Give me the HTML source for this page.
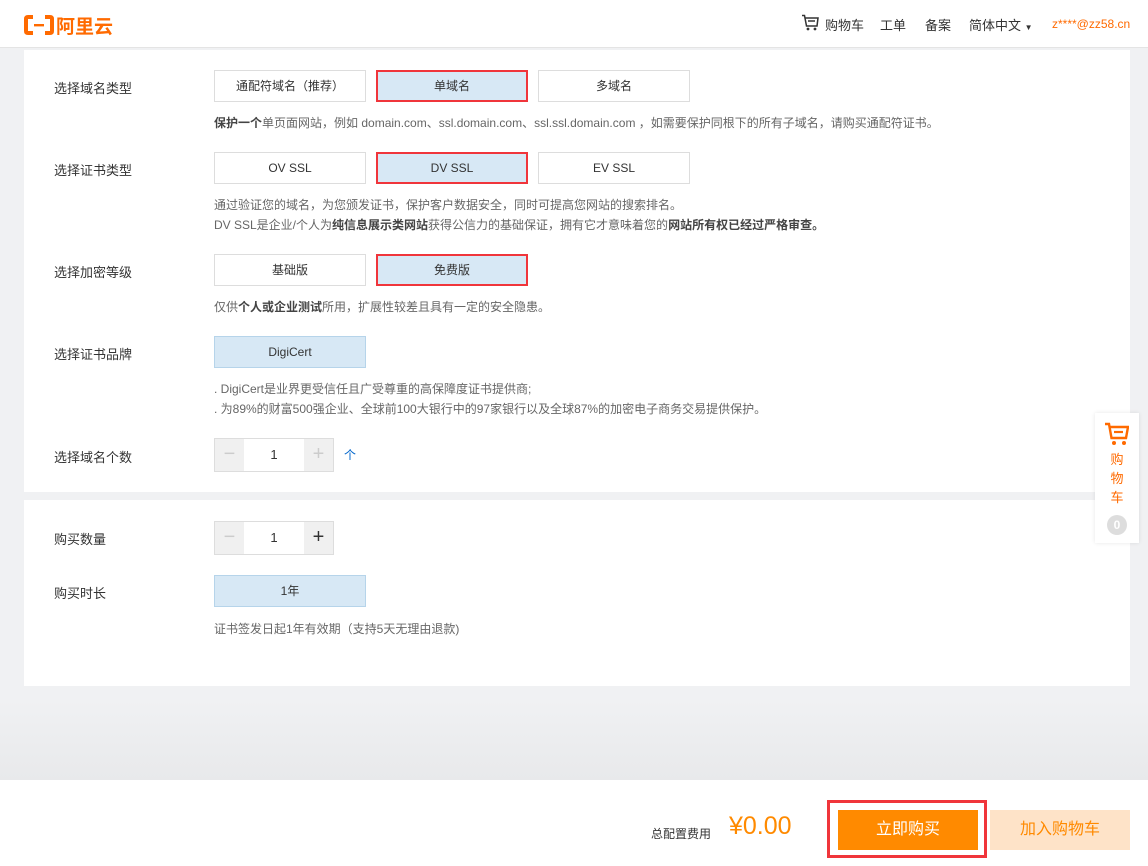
<!DOCTYPE html>
<html><head><meta charset="utf-8"><style>
*{margin:0;padding:0;box-sizing:border-box}
body{width:1148px;height:866px;overflow:hidden;background:#f0f1f3;font-family:"Liberation Sans","Noto Sans CJK SC",sans-serif;position:relative;color:#333}
.a{position:absolute;white-space:nowrap}
.hdr{left:0;top:0;width:1148px;height:48px;background:#fff;border-bottom:1px solid #e4e4e4}
.panel{background:#fff;left:24px;width:1106px}
.lbl{font-size:13px;color:#333;left:54px}
.btn{width:152px;height:32px;border:1px solid #ddd;background:#fff;font-size:12px;color:#333;text-align:center;line-height:30px}
.sel{background:#d7e8f5;border:1px solid #b6d4ea}
.red{border:2px solid #f0353b;line-height:28px}
.desc{font-size:12px;color:#666;left:214px;white-space:nowrap}
.desc b{color:#444}
.step{width:120px;height:34px;border:1px solid #ddd;background:#fff;left:214px}
.step .m,.step .p{position:absolute;top:0;width:29px;height:32px;background:#f0f0f0;color:#ccc;font-size:20px;text-align:center;line-height:30px}
.step .m{left:0}.step .p{right:0}
.step .v{position:absolute;left:29px;right:29px;top:0;line-height:32px;text-align:center;font-size:13px}
</style></head><body>
<div class="a" style="left:0;top:700px;width:1148px;height:80px;background:linear-gradient(#f0f1f3,#e8e9eb)"></div>
<div class="a hdr"></div>
<div class="a" style="left:24px;top:14px;width:100px;height:22px">
<svg width="30" height="20" viewBox="0 0 30 20" style="position:absolute;left:0;top:1px"><path d="M9 2H4Q2 2 2 4V16Q2 18 4 18H9M21 2H26Q28 2 28 4V16Q28 18 26 18H21" stroke="#ff6a00" stroke-width="4" fill="none"/><rect x="10" y="9" width="10" height="2.4" fill="#ff6a00"/></svg>
<span class="a" style="left:32px;top:-2px;font-size:19px;font-weight:bold;color:#ff6a00">阿里云</span></div>
<svg class="a" style="left:801px;top:14px" width="18" height="17" viewBox="0 0 18 17"><path d="M1 1.5H3.5L5.5 12H16L17 4H4.5" stroke="#333" stroke-width="1.5" fill="none"/><path d="M7 7H14" stroke="#333" stroke-width="1.5"/><circle cx="7" cy="15" r="1.4" fill="#333"/><circle cx="14" cy="15" r="1.4" fill="#333"/></svg>
<span class="a" style="left:825px;top:15px;font-size:13px">购物车</span>
<span class="a" style="left:880px;top:15px;font-size:13px">工单</span>
<span class="a" style="left:925px;top:15px;font-size:13px">备案</span>
<span class="a" style="left:969px;top:15px;font-size:13px">简体中文 <span style="font-size:8px">▼</span></span>
<span class="a" style="left:1052px;top:17px;font-size:12px;color:#ff6a00">z****@zz58.cn</span>

<div class="a panel" style="top:50px;height:442px"></div>
<div class="a panel" style="top:500px;height:186px"></div>

<span class="a lbl" style="top:78px">选择域名类型</span>
<div class="a btn" style="left:214px;top:70px">通配符域名（推荐）</div>
<div class="a btn sel red" style="left:376px;top:70px">单域名</div>
<div class="a btn" style="left:538px;top:70px">多域名</div>
<div class="a desc" style="top:114px"><b>保护一个</b>单页面网站，例如 domain.com、ssl.domain.com、ssl.ssl.domain.com ，如需要保护同根下的所有子域名，请购买通配符证书。</div>

<span class="a lbl" style="top:160px">选择证书类型</span>
<div class="a btn" style="left:214px;top:152px">OV SSL</div>
<div class="a btn sel red" style="left:376px;top:152px">DV SSL</div>
<div class="a btn" style="left:538px;top:152px">EV SSL</div>
<div class="a desc" style="top:196px">通过验证您的域名，为您颁发证书，保护客户数据安全，同时可提高您网站的搜索排名。</div>
<div class="a desc" style="top:216px">DV SSL是企业/个人为<b>纯信息展示类网站</b>获得公信力的基础保证，拥有它才意味着您的<b>网站所有权已经过严格审查。</b></div>

<span class="a lbl" style="top:262px">选择加密等级</span>
<div class="a btn" style="left:214px;top:254px">基础版</div>
<div class="a btn sel red" style="left:376px;top:254px">免费版</div>
<div class="a desc" style="top:298px">仅供<b>个人或企业测试</b>所用，扩展性较差且具有一定的安全隐患。</div>

<span class="a lbl" style="top:344px">选择证书品牌</span>
<div class="a btn sel" style="left:214px;top:336px">DigiCert</div>
<div class="a desc" style="top:380px">. DigiCert是业界更受信任且广受尊重的高保障度证书提供商;</div>
<div class="a desc" style="top:400px">. 为89%的财富500强企业、全球前100大银行中的97家银行以及全球87%的加密电子商务交易提供保护。</div>

<span class="a lbl" style="top:447px">选择域名个数</span>
<div class="a step" style="top:438px"><div class="m">−</div><div class="v">1</div><div class="p">+</div></div>
<span class="a" style="left:344px;top:446px;font-size:12px;color:#06c">个</span>

<span class="a lbl" style="top:529px">购买数量</span>
<div class="a step" style="top:521px"><div class="m">−</div><div class="v">1</div><div class="p" style="color:#333">+</div></div>
<span class="a lbl" style="top:583px">购买时长</span>
<div class="a btn sel" style="left:214px;top:575px">1年</div>
<div class="a desc" style="top:620px">证书签发日起1年有效期（支持5天无理由退款)</div>

<div class="a" style="left:0;top:780px;width:1148px;height:86px;background:#fff"></div>
<span class="a" style="left:651px;top:825px;font-size:12px;color:#333">总配置费用</span>
<span class="a" style="left:729px;top:812px;font-size:25px;color:#ff8a00">¥0.00</span>
<div class="a" style="left:827px;top:800px;width:160px;height:58px;border:3px solid #f0353b"></div>
<div class="a" style="left:838px;top:810px;width:140px;height:40px;background:#ff8a00;color:#fff;font-size:16px;text-align:center;line-height:40px">立即购买</div>
<div class="a" style="left:990px;top:810px;width:140px;height:40px;background:#fee3c8;color:#ff8a00;font-size:16px;text-align:center;line-height:40px">加入购物车</div>

<div class="a" style="left:1095px;top:413px;width:44px;height:130px;background:#fff;box-shadow:0 0 4px rgba(0,0,0,.1)"></div>
<svg class="a" style="left:1104px;top:422px" width="25" height="24" viewBox="0 0 25 24"><path d="M1 2H5L7.5 16H22L24 5H6" stroke="#ff6a00" stroke-width="2.4" fill="none"/><path d="M10 10H19" stroke="#ff6a00" stroke-width="2.2"/><circle cx="10" cy="21" r="2" fill="#ff6a00"/><circle cx="20" cy="21" r="2" fill="#ff6a00"/></svg>
<div class="a" style="left:1095px;top:450px;width:44px;text-align:center;font-size:13px;line-height:19px;color:#ff6a00;white-space:normal">购<br>物<br>车</div>
<div class="a" style="left:1107px;top:515px;width:20px;height:20px;border-radius:50%;background:#ddd;color:#fff;font-size:12px;text-align:center;line-height:20px;font-weight:bold">0</div>
</body></html>
